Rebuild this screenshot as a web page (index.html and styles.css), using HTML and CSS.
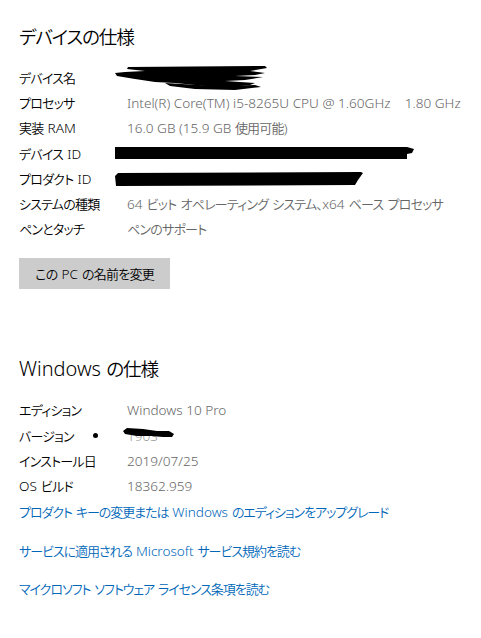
FILE: index.html
```html
<!DOCTYPE html>
<html lang="ja">
<head>
  <meta charset="UTF-8">
  <meta name="viewport" content="width=device-width, initial-scale=1.0">
  <title>バージョン情報</title>
  <link rel="stylesheet" href="styles.css">
</head>
<body>
  <div class="page">
    <h2 class="section-title">デバイスの仕様</h2>
    <div class="spec-list">
      <div class="spec-row">
        <span class="spec-label">デバイス名</span>
        <span class="spec-value">
          <svg class="scribble" width="155" height="28" viewBox="0 0 155 28">
            <path d="M13 3 L150 2 L152 4 L135 7 L150 9 L140 11 L120 12 L148 13 L130 16 L110 17 L140 19 L135 21 L115 23 L100 23 L80 21 L60 19 L40 18 L20 15 L2 12 L0 9 L10 8 L30 7 L12 5 Z" fill="#000"/>
            <path d="M50 19 L100 22 L140 21 L146 23 L120 26 L80 25 L55 22 Z" fill="#000"/>
          </svg>
        </span>
      </div>
      <div class="spec-row">
        <span class="spec-label">プロセッサ</span>
        <span class="spec-value"><span class="en">Intel(R) Core(TM) i5-8265U CPU @ 1.60GHz&nbsp;&nbsp;&nbsp;&nbsp;1.80 GHz</span></span>
      </div>
      <div class="spec-row">
        <span class="spec-label">実装 <span class="en">RAM</span></span>
        <span class="spec-value"><span class="en">16.0 GB (15.9 GB </span>使用可能<span class="en">)</span></span>
      </div>
      <div class="spec-row">
        <span class="spec-label">デバイス <span class="en">ID</span></span>
        <span class="spec-value">
          <svg class="scribble" width="300" height="14" viewBox="0 0 300 14">
            <path d="M0 1 L292 1 L299 3 L297 7 L292 8 L292 13 L0 13 Z" fill="#000"/>
          </svg>
        </span>
      </div>
      <div class="spec-row">
        <span class="spec-label">プロダクト <span class="en">ID</span></span>
        <span class="spec-value">
          <svg class="scribble" width="250" height="15" viewBox="0 0 250 15">
            <path d="M3 2 L246 1 L248 2 L243 9 L240 14 L1 15 L0 5 Z" fill="#000"/>
          </svg>
        </span>
      </div>
      <div class="spec-row">
        <span class="spec-label">システムの種類</span>
        <span class="spec-value"><span class="en">64</span> ビット オペレーティング システム、<span class="en">x64</span> ベース プロセッサ</span>
      </div>
      <div class="spec-row">
        <span class="spec-label">ペンとタッチ</span>
        <span class="spec-value">ペンのサポート</span>
      </div>
    </div>
    <button class="rename-button">この <span class="en">PC</span> の名前を変更</button>

    <h2 class="section-title windows-title"><span class="en">Windows</span> の仕様</h2>
    <div class="spec-list">
      <div class="spec-row">
        <span class="spec-label">エディション</span>
        <span class="spec-value"><span class="en">Windows 10 Pro</span></span>
      </div>
      <div class="spec-row">
        <span class="spec-label">バージョン<span class="dot"></span></span>
        <span class="spec-value version-value">
          <span class="en hidden-text">1903</span>
          <svg class="scribble over" width="52" height="12" viewBox="0 0 52 12">
            <path d="M4 1 L20 2 L34 4 L46 4 L51 7 L49 10 L40 10 L28 9 L14 9 L2 7 L0 4 Z" fill="#000"/>
          </svg>
        </span>
      </div>
      <div class="spec-row">
        <span class="spec-label">インストール日</span>
        <span class="spec-value"><span class="en">2019/07/25</span></span>
      </div>
      <div class="spec-row">
        <span class="spec-label"><span class="en">OS</span> ビルド</span>
        <span class="spec-value"><span class="en">18362.959</span></span>
      </div>
    </div>

    <div class="links">
      <a href="#" class="link">プロダクト キーの変更または <span class="en">Windows</span> のエディションをアップグレード</a>
      <a href="#" class="link">サービスに適用される <span class="en">Microsoft</span> サービス規約を読む</a>
      <a href="#" class="link">マイクロソフト ソフトウェア ライセンス条項を読む</a>
    </div>
  </div>
</body>
</html>
```

FILE: styles.css
```css
/* Reset */
* {
  box-sizing: border-box;
  margin: 0;
  padding: 0;
}

/* Japanese text is set a bit smaller and tighter, latin runs sit in .en */
body {
  font-family: "Noto Sans", "Noto Sans CJK JP", sans-serif;
  font-feature-settings: "palt";
  font-weight: 350;
  word-spacing: 1.5px;
  background-color: #fff;
  color: #000;
}

.page {
  padding: 23px 19px 0;
}

.en {
  font-size: 1.045em;
  letter-spacing: normal;
  word-spacing: normal;
}

/* Section headings */
.section-title {
  font-size: 18.6px;
  letter-spacing: -0.06em;
  font-weight: 350;
  line-height: 28px;
}

.section-title .en {
  font-size: 1.075em;
}

.windows-title {
  margin-top: 66px;
}

/* Spec rows */
.spec-list {
  margin-top: 14px;
  display: flex;
  flex-direction: column;
}

.spec-row {
  display: flex;
  align-items: center;
  height: 25.2px;
  font-size: 13px;
  letter-spacing: -0.06em;
}

.spec-label {
  width: 108px;
  flex-shrink: 0;
  position: relative;
}

.spec-value {
  color: #666;
  display: flex;
  align-items: center;
  white-space: pre;
}

.scribble {
  display: block;
  margin-left: -12px;
}

.dot {
  position: absolute;
  left: 74px;
  top: 50%;
  width: 5px;
  height: 5px;
  margin-top: -2px;
  border-radius: 50%;
  background: #000;
}

.version-value {
  position: relative;
}

.hidden-text {
  color: #999;
}

.scribble.over {
  position: absolute;
  left: -4px;
  top: 1px;
  margin-left: 0;
}

/* Rename button */
.rename-button {
  margin-top: 17px;
  width: 151px;
  height: 31px;
  border: none;
  background-color: #ccc;
  font-family: inherit;
  font-feature-settings: "palt";
  font-weight: 350;
  font-size: 13px;
  letter-spacing: -0.06em;
  word-spacing: 1.5px;
  color: #000;
}

/* Links */
.links {
  margin-top: 4px;
  display: flex;
  flex-direction: column;
  align-items: flex-start;
  gap: 18.5px;
}

.link {
  color: #0067b8;
  text-decoration: none;
  font-size: 13px;
  letter-spacing: -0.08em;
  line-height: 20px;
}
```
